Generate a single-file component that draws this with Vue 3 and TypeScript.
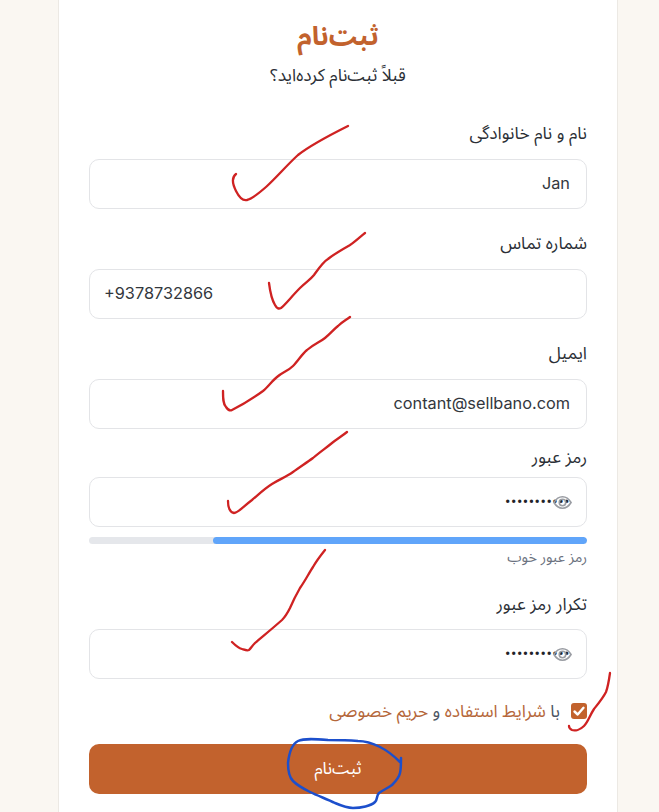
<script setup lang="ts">
interface Field {
  label: string
  value: string
  type: string
  kind: string
  ltr?: boolean
  eye?: boolean
  strength?: boolean
}

const fields: Field[] = [
  { label: 'نام و نام خانوادگی', value: 'Jan', type: 'text', kind: 'field-first' },
  { label: 'شماره تماس', value: '+9378732866', type: 'text', kind: 'field-plain', ltr: true },
  { label: 'ایمیل', value: 'contant@sellbano.com', type: 'text', kind: 'field-plain' },
  { label: 'رمز عبور', value: 'password123', type: 'password', kind: 'field-pass', eye: true, strength: true },
  { label: 'تکرار رمز عبور', value: 'password123', type: 'password', kind: 'field-repeat', eye: true },
]

const redMarks: string[] = [
  'M236 174C232 177 232 183 236 191C239 197 243 201 247 200C252 199 258 194 266 187C276 178 287 165 298 155C312 144 330 135 348 126',
  'M269 283C270 291 272 300 275 305C277 309 279 309 281 308C285 305 292 296 300 288C306 282 310 280 314 275C319 268 323 262 328 259C334 254 343 249 350 245C356 241 361 236 365 233',
  'M223 391C223 398 223 404 226 407C228 410 230 411 232 410C238 407 252 399 263 391C268 387 272 381 277 377C283 372 288 371 293 366C298 361 302 354 307 350C314 344 320 342 325 338C330 334 334 329 338 326C342 322 346 320 350 317',
  'M228 501C228 507 229 512 234 513C238 513 244 506 252 500C258 495 264 489 272 484C280 479 286 477 293 472C300 467 306 463 313 458C320 452 326 448 332 443C337 439 342 436 347 432',
  'M232 642C236 646 238 648 242 649C245 650 247 651 249 650C251 648 252 646 255 643C262 637 273 628 282 620C286 616 288 612 290 608C293 601 296 595 300 588C305 581 309 573 313 567C317 560 321 555 325 550',
  'M610 673C609 680 608 687 606 692C603 698 598 704 594 709C590 715 588 722 584 726C580 730 575 731 572 730C570 729 569 728 569 726',
]
</script>

<template>
  <main class="page">
    <section class="card" dir="rtl">
      <h1 class="title">ثبت‌نام</h1>
      <p class="subtitle">قبلاً ثبت‌نام کرده‌اید؟</p>

      <div v-for="field in fields" :key="field.label" class="field" :class="field.kind">
        <label class="label">{{ field.label }}</label>
        <div class="input-wrap">
          <input
            class="input"
            :class="{ 'input-ltr': field.ltr, 'input-pass': field.type === 'password' }"
            :type="field.type"
            :value="field.value"
          />
          <svg v-if="field.eye" class="eye" viewBox="0 0 20 20" fill="none" stroke="#9a9da3" stroke-width="1.700">
            <path d="M1 10C3.500 5.800 6.500 4 10 4S16.500 5.800 19 10C16.500 14.200 13.500 16 10 16S3.500 14.200 1 10Z" />
            <circle cx="10" cy="10" r="3.400" />
          </svg>
        </div>
        <template v-if="field.strength">
          <div class="meter"><div class="meter-fill"></div></div>
          <div class="hint">رمز عبور خوب</div>
        </template>
      </div>

      <div class="terms">
        <span class="check">
          <svg viewBox="0 0 16 16" fill="none" stroke="#fff" stroke-width="2.400" stroke-linecap="round" stroke-linejoin="round">
            <path d="M3.500 8.500L6.700 11.500L12.500 4.800" />
          </svg>
        </span>
        <span class="terms-text">با <a class="link">شرایط استفاده</a> و <a class="link">حریم خصوصی</a></span>
      </div>

      <button class="submit" type="button">ثبت‌نام</button>
    </section>

    <svg class="ink" viewBox="0 0 659 812" fill="none" stroke-linecap="round" stroke-linejoin="round">
      <path v-for="d in redMarks" :key="d" :d="d" stroke="#cf2222" stroke-width="2.300" />
      <path
        d="M400 762C394 756 388 751 380 747C372 743 366 741 358 741C346 740 336 740 328 740C316 739 304 738 298 741C292 744 289 754 288 763C288 771 289 777 293 781C298 786 304 789 310 792C318 796 327 799 335 803C342 806 347 808 353 808C361 808 371 806 375 802C378 799 376 796 379 793C383 790 388 788 392 785C396 781 399 778 400 773C401 769 401 764 401 758"
        stroke="#1c4fcc"
        stroke-width="2.500"
      />
    </svg>
  </main>
</template>

<style scoped>
.page {
  position: relative;
  width: 659px;
  height: 812px;
  overflow: hidden;
  background: #faf7f2;
  font-family: "Noto Sans Arabic", "DejaVu Sans", "Noto Sans", sans-serif;
}

.card {
  box-sizing: border-box;
  width: 560px;
  height: 812px;
  margin-left: 58px;
  padding: 14px 30px 0;
  background: #fff;
  border-left: 1px solid #ece9e4;
  border-right: 1px solid #ece9e4;
}

.title {
  margin: 0;
  height: 46px;
  line-height: 46px;
  text-align: center;
  font-size: 26.500px;
  font-weight: 700;
  color: #c2622d;
}

.subtitle {
  margin: 4px 0 0;
  height: 24px;
  line-height: 24px;
  text-align: center;
  font-size: 17.300px;
  color: #2b2f36;
}

.label {
  display: block;
  height: 24px;
  line-height: 24px;
  font-size: 17.300px;
  color: #2b2f36;
}

.field-first {
  margin-top: 34px;
}

.field-plain {
  margin-top: 23px;
}

.field-first .label,
.field-plain .label {
  margin-bottom: 13px;
}

.field-pass {
  margin-top: 17px;
}

.field-pass .label {
  margin-bottom: 7px;
}

.field-repeat {
  margin-top: 25px;
}

.field-repeat .label {
  margin-bottom: 12px;
}

.input-wrap {
  position: relative;
  height: 50px;
}

.input {
  box-sizing: border-box;
  display: block;
  width: 100%;
  height: 50px;
  padding: 0 16px 2px;
  border: 1px solid #e3e4e7;
  border-radius: 10px;
  background: #fff;
  font-family: Inter, sans-serif;
  font-size: 16.300px;
  color: #33373d;
  outline: none;
  text-align: right;
}

.input-ltr {
  direction: ltr;
  text-align: left;
  padding-left: 14px;
}

.input-pass {
  font-family: Roboto, sans-serif;
  font-size: 16px;
  letter-spacing: 0.500px;
  color: #1f2329;
}

.eye {
  position: absolute;
  right: 15px;
  top: 16px;
  width: 19px;
  height: 19px;
}

.meter {
  height: 7px;
  margin-top: 10px;
  border-radius: 4px;
  background: #e5e7eb;
  overflow: hidden;
}

.meter-fill {
  width: 75.200%;
  height: 100%;
  border-radius: 4px;
  background: #60a5fa;
}

.hint {
  margin-top: 4px;
  height: 20px;
  line-height: 20px;
  font-size: 14.500px;
  color: #6b7280;
}

.terms {
  display: flex;
  align-items: center;
  gap: 11px;
  height: 24px;
  margin-top: 20px;
}

.check {
  display: flex;
  width: 16px;
  height: 16px;
  border-radius: 3px;
  background: #c2622d;
}

.check svg {
  width: 16px;
  height: 16px;
}

.terms-text {
  font-size: 17.300px;
  color: #4b5563;
}

.link {
  color: #b5673a;
}

.submit {
  display: block;
  width: 100%;
  height: 50px;
  margin-top: 21px;
  border: 0;
  border-radius: 10px;
  background: #c2622d;
  color: #fff;
  font-family: inherit;
  font-size: 17px;
}

.ink {
  position: absolute;
  inset: 0;
  width: 659px;
  height: 812px;
  pointer-events: none;
}
</style>
